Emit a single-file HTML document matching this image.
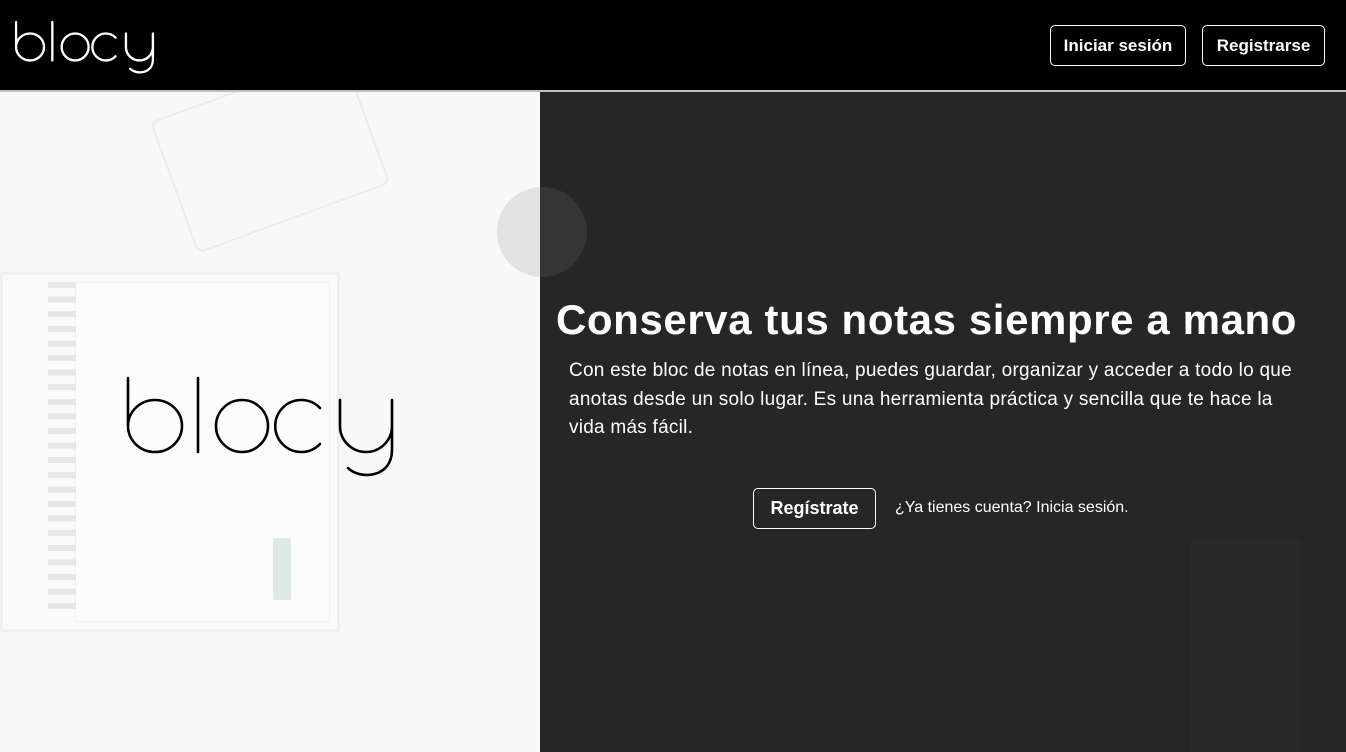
<!DOCTYPE html>
<html><head><meta charset="utf-8"><style>
*{margin:0;padding:0;box-sizing:border-box}
body{width:1346px;height:752px;overflow:hidden;background:#262626;font-family:"Liberation Sans",sans-serif;position:relative}
.hdr{position:absolute;left:0;top:0;width:1346px;height:90px;background:#000}
.line{position:absolute;left:0;top:90px;width:1346px;height:2px;background:#bdbdbd}
.btn{position:absolute;border:1px solid #fff;border-radius:5px;color:#fff;font-weight:bold;font-size:17px;display:flex;align-items:center;justify-content:center}
.left{position:absolute;left:0;top:92px;width:540px;height:660px;background:#f8f8f8;overflow:hidden}
.right{position:absolute;left:540px;top:92px;width:806px;height:660px;background:#262626;overflow:hidden}
h1{position:absolute;left:556px;top:296px;font-size:42px;color:#fff;font-weight:bold;white-space:nowrap;letter-spacing:0.6px}
.p{position:absolute;left:569px;top:357px;color:#fff;font-size:19px;line-height:28.5px;white-space:nowrap;letter-spacing:0.25px}
.lk{position:absolute;left:895px;top:499px;color:#fff;font-size:16px}
</style></head><body>
<div class="hdr"></div>
<svg style="position:absolute;left:15px;top:21px" width="141" height="54" viewBox="-2 -2 272 104"><g fill="none" stroke="#fff" stroke-width="4.5" stroke-linecap="round">
<path d="M0 0V48A27 26 0 1 0 27 22A27 26 0 0 0 0 48"/><path d="M70 0V74"/><circle cx="114" cy="48" r="26"/><path d="M192 30A26 26 0 1 0 192 66"/><path d="M212 22V48A26 26 0 0 0 264 48M264 22V72C264 100 232 102 220 90"/></g></svg>
<div class="btn" style="left:1050px;top:25px;width:136px;height:41px">Iniciar sesión</div>
<div class="btn" style="left:1202px;top:25px;width:123px;height:41px">Registrarse</div>
<div class="line"></div>
<div class="left">
<div style="position:absolute;width:205px;height:140px;border:2px solid #ececec;border-radius:8px;transform:rotate(-20deg);transform-origin:0 0;left:150px;top:30px"></div>
<div style="position:absolute;left:0;top:180px;width:340px;height:360px;border:3px solid #eef1f0;background:#fafafa"></div>
<div style="position:absolute;left:75px;top:190px;width:255px;height:340px;background:#fcfcfc;border:1px solid #f0f0f0"></div>
<div style="position:absolute;left:48px;top:190px;width:28px;height:330px;background:repeating-linear-gradient(#e6e6e6 0 6px,transparent 6px 14.6px)"></div>
<div style="position:absolute;left:273px;top:446px;width:18px;height:62px;background:#dfeae7;border-radius:2px"></div>
<div style="position:absolute;left:497px;top:95px;width:90px;height:90px;border-radius:50%;background:#e2e2e2"></div>
</div>
<div class="right">
<div style="position:absolute;left:-43px;top:95px;width:90px;height:90px;border-radius:50%;background:#353535"></div>
<div style="position:absolute;left:650px;top:448px;width:110px;height:212px;background:#292929"></div>
</div>
<svg style="position:absolute;left:126px;top:376px" width="272" height="104" viewBox="-2 -2 272 104"><g fill="none" stroke="#000" stroke-width="2.6" stroke-linecap="round">
<path d="M0 0V48A27 26 0 1 0 27 22A27 26 0 0 0 0 48"/><path d="M70 0V74"/><circle cx="114" cy="48" r="26"/><path d="M192 30A26 26 0 1 0 192 66"/><path d="M212 22V48A26 26 0 0 0 264 48M264 22V72C264 100 232 102 220 90"/></g></svg>
<h1>Conserva tus notas siempre a mano</h1>
<div class="p">Con este bloc de notas en línea, puedes guardar, organizar y acceder a todo lo que<br>anotas desde un solo lugar. Es una herramienta práctica y sencilla que te hace la<br>vida más fácil.</div>
<div class="btn" style="left:753px;top:488px;width:123px;height:41px;font-size:18px">Regístrate</div>
<div class="lk">¿Ya tienes cuenta? Inicia sesión.</div>
</body></html>
